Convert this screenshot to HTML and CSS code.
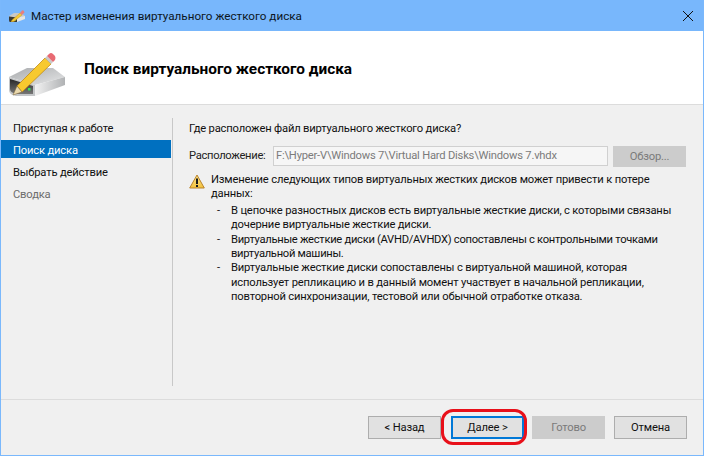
FILE: index.html
```html
<!DOCTYPE html>
<html lang="ru">
<head>
<meta charset="utf-8">
<title>Мастер изменения виртуального жесткого диска</title>
<link rel="stylesheet" href="styles.css">
</head>
<body>
<div class="window">
  <div class="titlebar">
    <svg class="title-icon" width="16" height="12" viewBox="0 0 16 12">
      <path d="M0 6 L5 3 H12 L16 6 L8 8 H1 Z" fill="#c9c9c7"/>
      <path d="M0 6.500 L8 7.500 V12 H1 Q0 12 0 10 Z" fill="#3a3a36"/>
      <path d="M8 7.500 L16 6 V9 L8 12 Z" fill="#e6e6e2"/>
      <rect x="5.500" y="9" width="1.500" height="1.500" fill="#4ce060"/>
      <path d="M3 10 L11 3 L13 5 L5 11.500 L2 12 Z" fill="#f4c93a" stroke="#b98a1c" stroke-width=".4"/>
      <path d="M11 3 L13 .5 Q14 0 15 1 L15.500 2.500 L13 5 Z" fill="#e77f7f"/>
    </svg>
    <span class="title-text">Мастер изменения виртуального жесткого диска</span>
    <svg class="close" width="10" height="10" viewBox="0 0 10 10"><path d="M0 0 10 10M10 0 0 10" stroke="#111" stroke-width="1" fill="none"/></svg>
  </div>
  <div class="header">
    <svg class="header-icon" width="60" height="50" viewBox="7 50 60 50">
      <defs>
        <linearGradient id="top" x1="0" y1="0" x2="1" y2="1"><stop offset="0" stop-color="#a9abad"/><stop offset="1" stop-color="#e6e7e8"/></linearGradient>
        <linearGradient id="side" x1="0" y1="0" x2="1" y2="0"><stop offset="0" stop-color="#f2f2f2"/><stop offset="1" stop-color="#b0b2b4"/></linearGradient>
        <linearGradient id="front" x1="0" y1="0" x2="0" y2="1"><stop offset="0" stop-color="#262626"/><stop offset="1" stop-color="#777"/></linearGradient>
      </defs>
      <path d="M9 77 L27 68 H53 L65 77 L35 85 Z" fill="url(#top)"/>
      <path d="M35 85 L65 77 V85 L35 96 Z" fill="url(#side)"/>
      <path d="M9 77 L35 85 V96 H16 Q9 95 9 90 Z" fill="#c4c6c8"/>
      <path d="M10 79 L33 86 V94 H17 Q10 93 10 89 Z" fill="url(#front)"/>
      <rect x="28" y="88" width="2.500" height="2.500" fill="#35e35a"/>
      <path d="M17 86 L45 58 L51 64 L22 92 Z" fill="#f7c92f" stroke="#c28c16" stroke-width=".8"/>
      <path d="M17 86 L22 92 L13 95 Z" fill="#ead9ae" stroke="#7a6030" stroke-width=".5"/>
      <path d="M45 58 L47 56 L53 62 L51 64 Z" fill="#c9c9c9"/>
      <path d="M47 56 L49 54 Q51 52 53 54 L55 56 Q56 58 55 60 L53 62 Z" fill="#e86a73"/>
    </svg>
    <h1 class="heading">Поиск виртуального жесткого диска</h1>
  </div>
  <div class="main">
    <nav class="sidebar">
      <div class="step">Приступая к работе</div>
      <div class="step step-active">Поиск диска</div>
      <div class="step">Выбрать действие</div>
      <div class="step step-muted">Сводка</div>
    </nav>
    <div class="divider"></div>
    <div class="content">
      <p class="question">Где расположен файл виртуального жесткого диска?</p>
      <div class="location">
        <span class="location-label">Расположение:</span>
        <div class="field">F:\Hyper-V\Windows 7\Virtual Hard Disks\Windows 7.vhdx</div>
        <div class="btn btn-disabled browse">Обзор...</div>
      </div>
      <div class="warning">
        <svg class="warn-icon" width="16" height="15" viewBox="0 0 16 15">
          <defs><linearGradient id="warn" x1="0" y1="0" x2="0" y2="1"><stop offset="0" stop-color="#fbe38a"/><stop offset="1" stop-color="#f3c23c"/></linearGradient></defs>
          <path d="M8 1 L15.300 14 H.7 Z" fill="url(#warn)" stroke="#b9822a" stroke-width="1" stroke-linejoin="round"/>
          <rect x="7" y="4.500" width="2" height="5.500" fill="#1a1a1a"/>
          <rect x="7" y="11" width="2" height="2" fill="#1a1a1a"/>
        </svg>
        <div class="warn-body">
          <p class="warn-lead">Изменение следующих типов виртуальных жестких дисков может привести к потере<br>данных:</p>
          <ul class="warn-list">
            <li class="warn-item">В цепочке разностных дисков есть виртуальные жесткие диски, с которыми связаны<br>дочерние виртуальные жесткие диски.</li>
            <li class="warn-item warn-item-tight">Виртуальные жесткие диски (AVHD/AVHDX) сопоставлены с контрольными точками<br>виртуальной машины.</li>
            <li class="warn-item">Виртуальные жесткие диски сопоставлены с виртуальной машиной, которая<br>использует репликацию и в данный момент участвует в начальной репликации,<br>повторной синхронизации, тестовой или обычной отработке отказа.</li>
          </ul>
        </div>
      </div>
    </div>
  </div>
  <div class="footer">
    <div class="btn">&lt; Назад</div>
    <div class="btn btn-primary">Далее &gt;<span class="ring"></span></div>
    <div class="btn btn-disabled">Готово</div>
    <div class="btn">Отмена</div>
  </div>
</div>
</body>
</html>
```
FILE: styles.css
```css
* { box-sizing: border-box; }
html, body { margin: 0; padding: 0; }
body { width: 704px; height: 456px; overflow: hidden; font-family: Roboto, "Noto Sans", sans-serif; font-size: 11.200px; letter-spacing: -.17px; color: #111; }
p, ul, h1 { margin: 0; padding: 0; }
.window { width: 704px; height: 456px; display: flex; flex-direction: column; background: #f0f0f0; border: 1px solid #7ab8fc; border-top: 0; }
.titlebar { height: 31px; flex: none; display: flex; align-items: center; background: #78b7fc; padding: 0 10px 0 8px; }
.title-icon { flex: none; margin-right: 6px; }
.title-text { flex: 1; color: #0c1622; font-size: 11.680px; letter-spacing: 0; }
.close { flex: none; }
.header { height: 74px; flex: none; display: flex; align-items: center; background: #fff; border-bottom: 1px solid #dcdcdc; padding-left: 6px; }
.header-icon { flex: none; margin-right: 17px; margin-top: 14px; }
.heading { font-size: 15.400px; font-weight: 700; color: #000; letter-spacing: 0; margin-top: 2px; }
.main { flex: 1; display: flex; min-height: 0; }
.sidebar { width: 170px; flex: none; padding-top: 12px; }
.step { height: 22px; line-height: 24px; padding-left: 12px; }
.step-active { height: 18px; line-height: 22px; margin: 1px 0 3px; background: #0070c0; color: #fff; }
.step-muted { color: #6d6d6d; }
.divider { width: 1px; flex: none; margin: 13px 0 13px 1px; background: #c8c8c8; }
.content { flex: 1; padding: 16px 0 0 16px; }
.question { line-height: 16px; }
.location { display: flex; align-items: flex-start; margin-top: 9px; }
.location-label { width: 84px; flex: none; color: #222; line-height: 20px; letter-spacing: -.3px; }
.field { width: 335px; height: 20px; line-height: 18px; border: 1px solid #d0d0d0; background: #f6f6f6; color: #7b7b7b; padding-left: 2px; white-space: nowrap; flex: none; letter-spacing: -.21px; }
.btn { position: relative; width: 73px; height: 23px; flex: none; display: flex; align-items: center; justify-content: center; background: #e1e1e1; border: 1px solid #adadad; color: #111; }
.btn-disabled { background: #cccccc; border-color: #cccccc; color: #7a7a7a; }
.browse { height: 21px; margin-left: 5px; }
.btn-primary { border: 2px solid #0078d7; }
.ring { position: absolute; left: -12px; top: -9px; width: 86px; height: 36px; border: 3px solid #e8101a; border-radius: 12px; }
.warning { display: flex; margin-top: 6px; }
.warn-icon { flex: none; margin-top: 1px; }
.warn-body { padding-left: 6px; flex: 1; white-space: nowrap; }
.warn-lead { line-height: 14.400px; }
.warn-list { list-style: none; margin-top: 2px; }
.warn-item { position: relative; padding-left: 20px; line-height: 14.400px; }
.warn-item-tight { letter-spacing: -.29px; }
.warn-item::before { content: "-"; position: absolute; left: 6px; top: 0; }
.footer { height: 56px; flex: none; display: flex; align-items: flex-start; justify-content: flex-end; gap: 9px; border-top: 1px solid #dcdcdc; padding: 16px 16px 0 0; }
.footer .btn:nth-child(2) { margin-left: 1px; }
.footer .btn:nth-child(3) { margin-left: -1px; }
```
